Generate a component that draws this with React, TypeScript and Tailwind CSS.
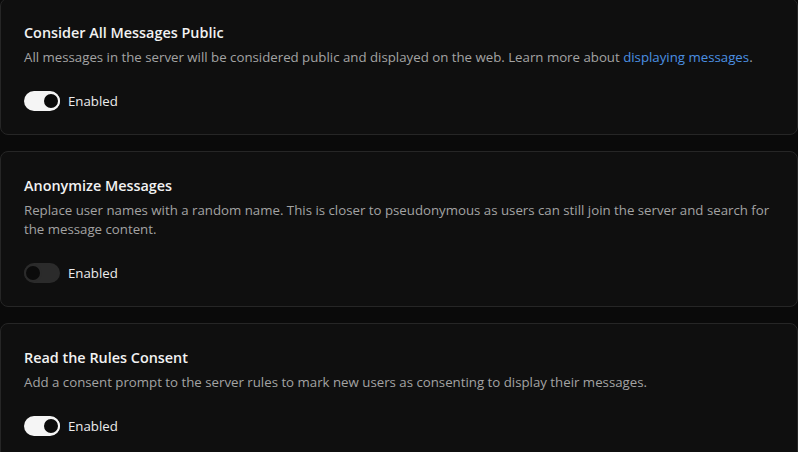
import { useState } from 'react';

interface Setting {
  title: string;
  description: React.ReactNode;
  enabled: boolean;
}

const SETTINGS: Setting[] = [
  {
    title: 'Consider All Messages Public',
    description: (
      <>
        All messages in the server will be considered public and displayed on the web. Learn more
        about <a className="text-[#4b8fe2]">displaying messages</a>.
      </>
    ),
    enabled: true,
  },
  {
    title: 'Anonymize Messages',
    description:
      'Replace user names with a random name. This is closer to pseudonymous as users can still join the server and search for the message content.',
    enabled: false,
  },
  {
    title: 'Read the Rules Consent',
    description:
      'Add a consent prompt to the server rules to mark new users as consenting to display their messages.',
    enabled: true,
  },
];

function Toggle({ on, onChange }: { on: boolean; onChange: () => void }) {
  return (
    <button
      onClick={onChange}
      className={`flex h-5 w-9 items-center rounded-full ${
        on ? 'justify-end bg-[#f5f5f5]' : 'justify-start bg-[#2b2b2b]'
      }`}
    >
      <span
        className={`h-[18px] w-[18px] rounded-full border-2 bg-[#0b0b0b] ${
          on ? 'border-[#f5f5f5]' : 'border-[#2b2b2b]'
        }`}
      />
    </button>
  );
}

function SettingCard({ setting }: { setting: Setting }) {
  const [on, setOn] = useState(setting.enabled);
  return (
    <div className="rounded-lg border border-[#262626] bg-[#0f0f0f] px-[23px] pt-[23px] pb-[23px]">
      <h3 className="text-[14.4px] leading-[22px] font-semibold text-[#f2f2f2]">{setting.title}</h3>
      <p className="mt-1 text-[13.25px] leading-[19px] text-[#a3a3a3]">{setting.description}</p>
      <div className="mt-6 flex items-center gap-2">
        <Toggle on={on} onChange={() => setOn(!on)} />
        <span className="text-[13.25px] leading-5 text-[#ececec]">Enabled</span>
      </div>
    </div>
  );
}

export default function App() {
  return (
    <div
      className="min-h-screen overflow-hidden bg-[#0a0a0a]"
      style={{ fontFamily: '"Open Sans", "Noto Sans", sans-serif' }}
    >
      <div className="-mt-[2px] flex flex-col gap-4">
        {SETTINGS.map((s) => (
          <SettingCard key={s.title} setting={s} />
        ))}
      </div>
    </div>
  );
}
